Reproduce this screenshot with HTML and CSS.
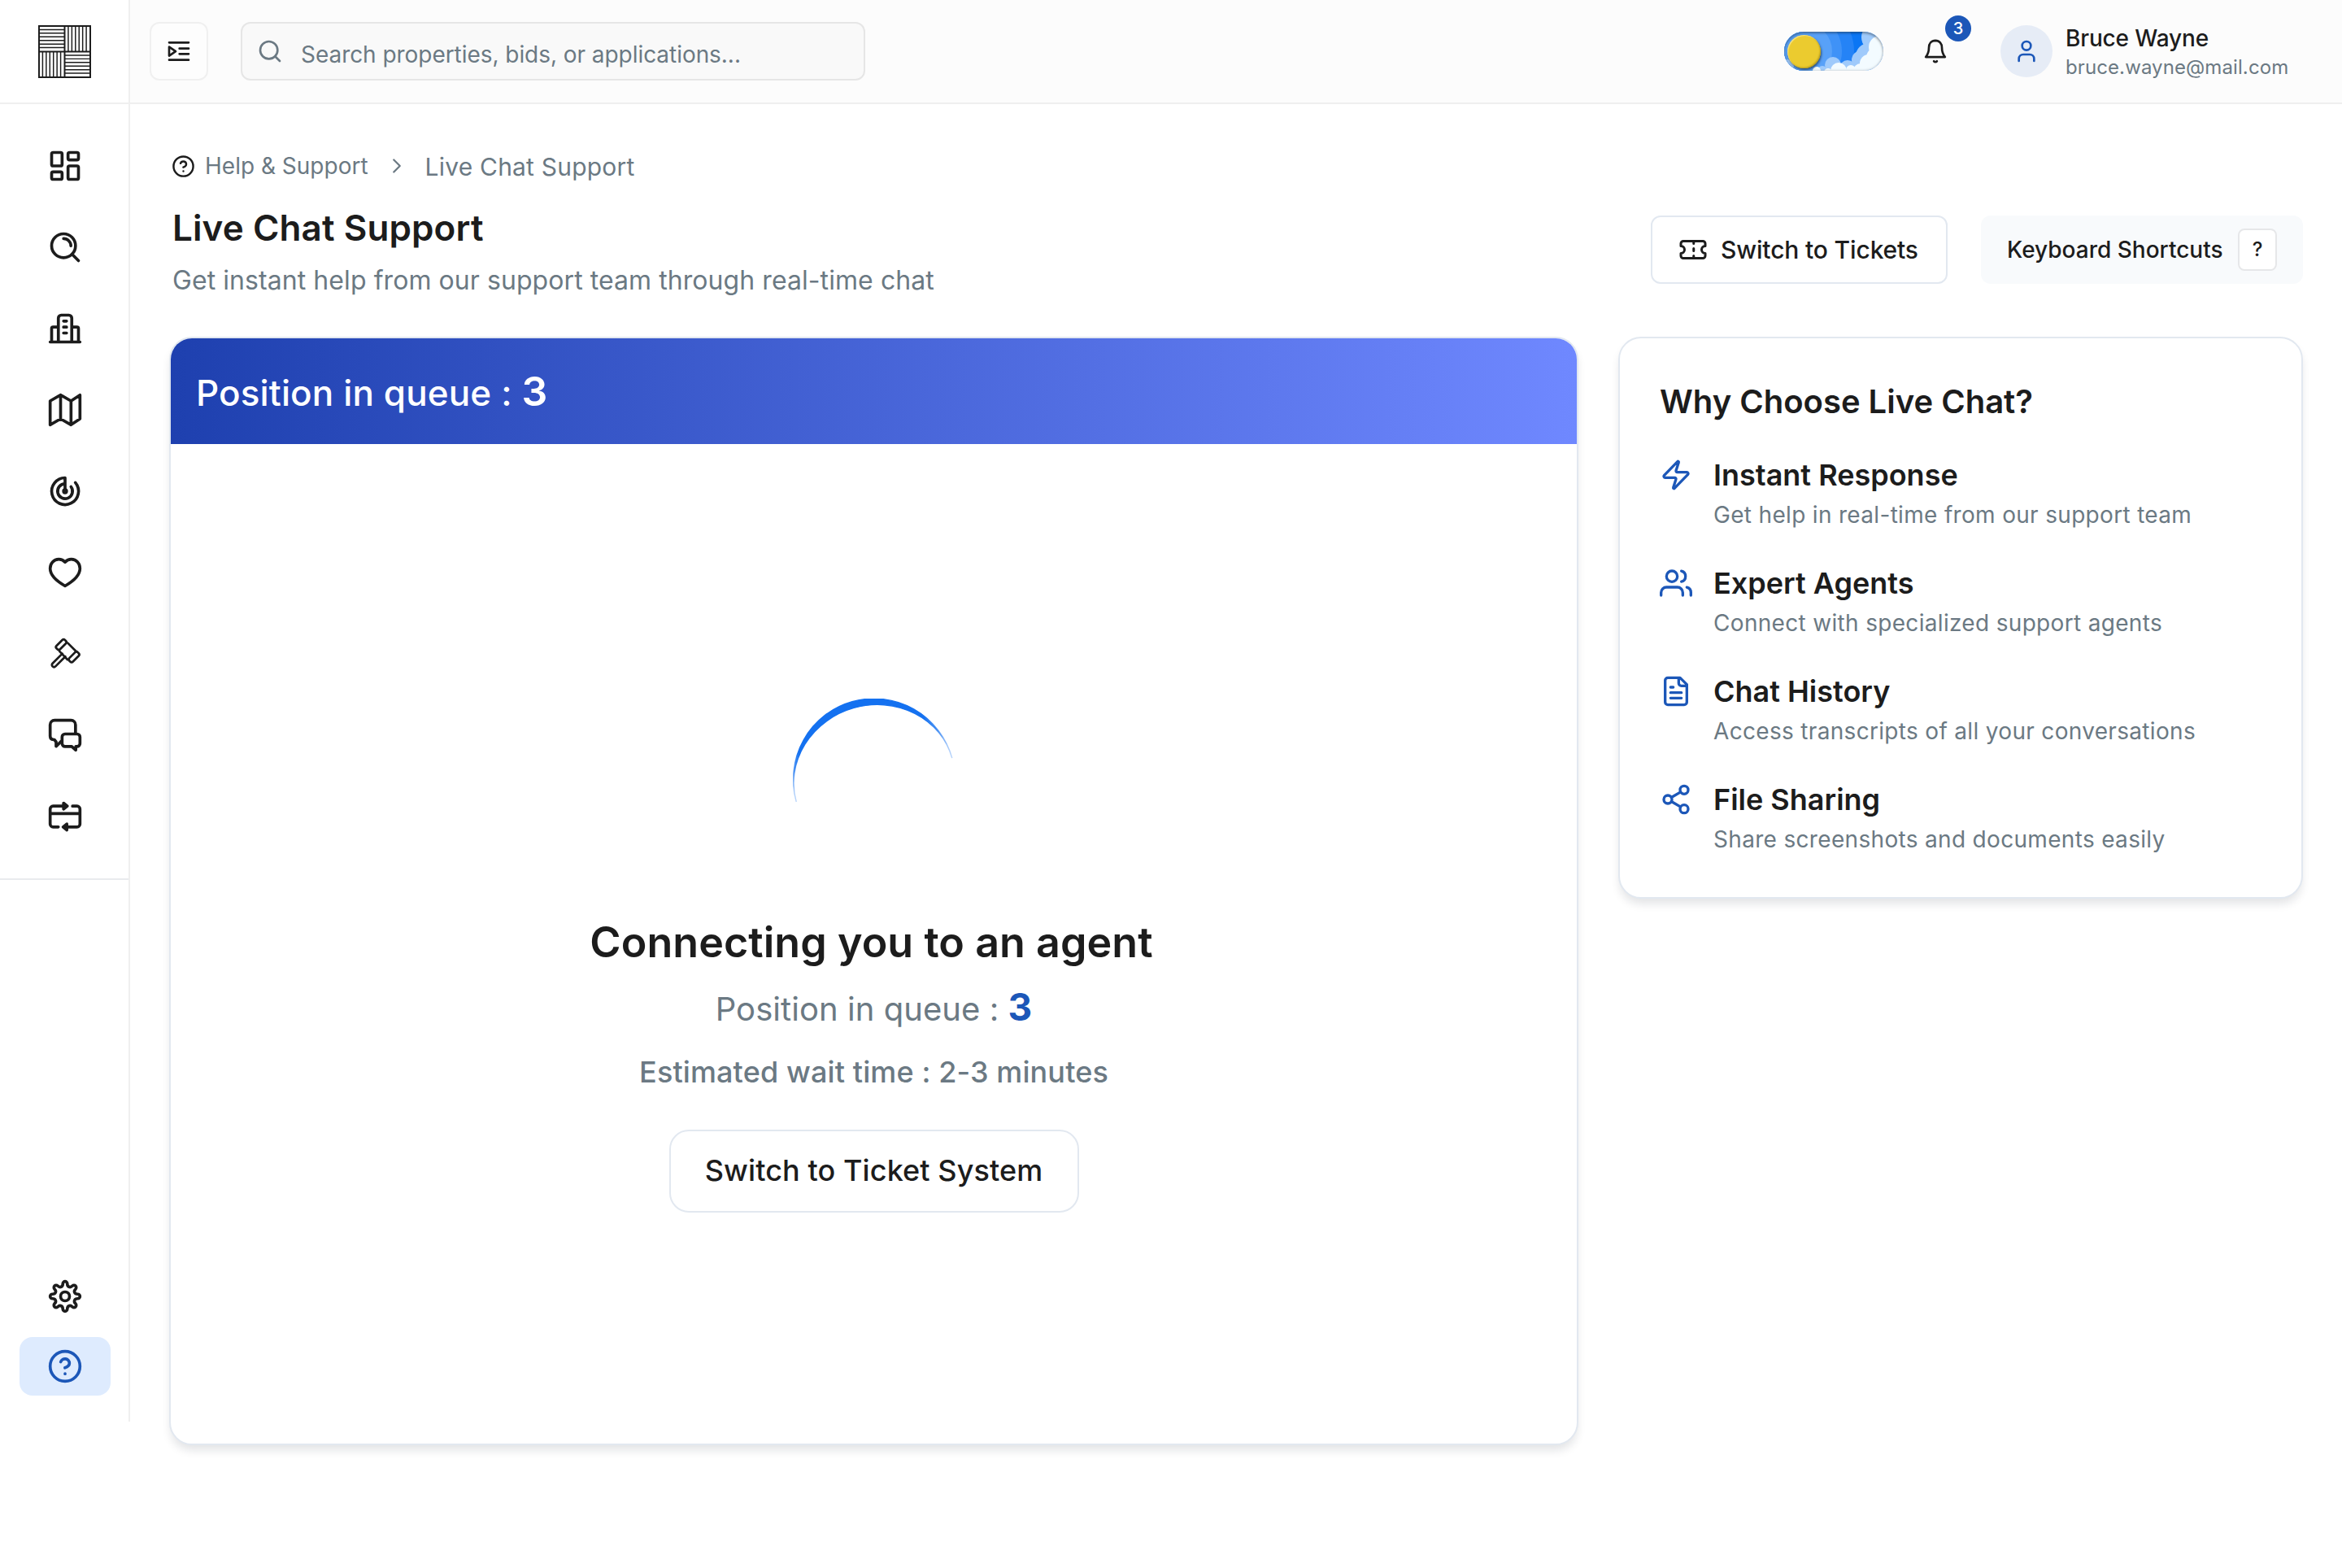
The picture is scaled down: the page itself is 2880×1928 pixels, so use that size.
FILE: index.html
```html
<!DOCTYPE html>
<html lang="en">
  <head>
    <meta charset="UTF-8" />
    <meta name="viewport" content="width=device-width, initial-scale=1.0" />
    <title>Live Chat Support</title>
    <link rel="stylesheet" href="styles.css">
  </head>
  <body>
    <div class="app">
      <aside class="sidebar">
        <a class="logo" href="#">
          <svg width="65" height="65" viewBox="0 0 66 66">
            <path d="M1 1h64v64H1zM33 1v64M1 33h64" stroke-width="2" />
            <path d="M1 5.500h32M1 10h32M1 14.500h32M1 19h32M1 23.500h32M1 28h32M33 37.500h32M33 42h32M33 46.500h32M33 51h32M33 55.500h32M33 60h32M37.500 1v32M42 1v32M46.500 1v32M51 1v32M55.500 1v32M60 1v32M5.500 33v32M10 33v32M14.500 33v32M19 33v32M23.500 33v32M28 33v32" stroke-width="1.500" />
          </svg>
        </a>
        <nav class="nav">
          <a href="#"><svg class="icon" viewBox="0 0 24 24"><rect x="3" y="3" width="7" height="9" rx="1" /><rect x="14" y="3" width="7" height="5" rx="1" /><rect x="14" y="12" width="7" height="9" rx="1" /><rect x="3" y="16" width="7" height="5" rx="1" /></svg></a>
          <a href="#"><svg class="icon" viewBox="0 0 24 24"><circle cx="11" cy="11" r="8" /><path d="m16.800 16.800 4.200 4.200M11 6.200a4.900 4.900 0 0 1 4.900 4.900" /></svg></a>
          <a href="#"><svg class="icon" viewBox="0 0 24 24"><path d="M2 21h20M7.500 21V5a2 2 0 0 1 2-2h5a2 2 0 0 1 2 2v16M3 21v-9a1 1 0 0 1 1-1h3.500M21 21v-9a1 1 0 0 0-1-1h-3.500M11 7h2M11 11h2M11 15h2" /></svg></a>
          <a href="#"><svg class="icon" viewBox="0 0 24 24"><path d="M2 6l7-4 7 4 6-4v16l-6 4-7-4-7 4zM9 2v16M16 6v16" /></svg></a>
          <a href="#"><svg class="icon" viewBox="0 0 24 24"><path d="M12 12V3a9 9 0 1 0 6.900 3.200M12 7a5 5 0 1 0 4 2" /><circle cx="12" cy="12" r="1" /></svg></a>
          <a href="#"><svg class="icon" viewBox="0 0 24 24"><path d="M12 5C10.800 3.700 9.400 3.100 7.800 3.100 4.500 3.100 2 5.800 2 9.300 2 14.500 7.800 18.600 12 21c4.200-2.400 10-6.500 10-11.700 0-3.500-2.500-6.200-5.800-6.200-1.600 0-3 .6-4.200 1.900z" /></svg></a>
          <a href="#"><svg class="icon icon-thin" viewBox="0 0 24 24"><rect x="5.400" y="4.100" width="8" height="3.400" rx="1.300" transform="rotate(-45 9.400 5.800)" /><rect x="14" y="12.400" width="8" height="3.400" rx="1.300" transform="rotate(-45 18 14.100)" /><path d="M13.800 4.700l5.400 5.400M8.300 10.300l5.300 5.500M10.200 11.800l-6.600 6.600a1.400 1.400 0 0 0 2 2l6.600-6.600" /></svg></a>
          <a href="#"><svg class="icon" viewBox="0 0 24 24"><path d="M19 11V5a3 3 0 0 0-3-3H5a3 3 0 0 0-3 3v7.500C2 14 3 15 4.800 15L6 16.500v3L9.500 16" /><path d="M12 11.200h8a2 2 0 0 1 2 2v4.400a2 2 0 0 1-2 2h-.800v2.400l-2.700-2.400H12a2 2 0 0 1-2-2v-4.400a2 2 0 0 1 2-2z" /></svg></a>
          <a href="#"><svg class="icon" viewBox="0 0 24 24"><path d="M7.500 19H4a2 2 0 0 1-2-2V7a2 2 0 0 1 2-2h8M17 5h3a2 2 0 0 1 2 2v10a2 2 0 0 1-2 2h-8M2 10h20" /><path class="solid" d="M11 3l2.500 2L11 7zM13.200 17l-2.500 2 2.500 2z" /></svg></a>
        </nav>
        <div class="nav-bottom">
          <a href="#"><svg class="icon" viewBox="-12 -12 24 24"><path d="M-1.500-8.500A1.500 1.500 0 0 1 1.500-8.500C1.500-6.300 3.390-5.510 4.950-7.070A1.500 1.500 0 0 1 7.070-4.950C5.510-3.390 6.300-1.500 8.500-1.500A1.500 1.500 0 0 1 8.500 1.500C6.300 1.500 5.510 3.390 7.070 4.950A1.500 1.500 0 0 1 4.950 7.070C3.390 5.510 1.500 6.300 1.500 8.500A1.500 1.500 0 0 1-1.500 8.500C-1.500 6.300-3.390 5.510-4.950 7.070A1.500 1.500 0 0 1-7.070 4.950C-5.510 3.390-6.300 1.500-8.500 1.500A1.500 1.500 0 0 1-8.500-1.500C-6.300-1.500-5.510-3.390-7.070-4.950A1.500 1.500 0 0 1-4.950-7.070C-3.390-5.510-1.500-6.300-1.500-8.500z" /><circle r="3" /></svg></a>
          <a class="active" href="#"><svg class="icon" viewBox="0 0 24 24"><circle cx="12" cy="12" r="10" /><path d="M9.090 9a3 3 0 0 1 5.830 1c0 2-3 3-3 3M12 17h.01" /></svg></a>
        </div>
      </aside>

      <div class="main">
        <header class="topbar">
          <button class="menu-btn">
            <svg class="icon" viewBox="0 0 24 24"><path d="M3 4h18M12.500 9.500H21M12.500 14.500H21M3 20h18M3 8v8.200l6-4.100z" /></svg>
          </button>
          <div class="search">
            <svg class="icon" viewBox="0 0 24 24"><circle cx="11" cy="11" r="8" /><path d="m21 21-4.300-4.300" /></svg>
            <span>Search properties, bids, or applications...</span>
          </div>
          <div class="theme-toggle">
            <svg width="122" height="48" viewBox="0 0 122 48">
              <rect width="122" height="48" fill="#0b76f4" />
              <circle cx="24" cy="24" r="62" fill="#2583f6" />
              <circle cx="24" cy="24" r="47" fill="#3f92f7" />
              <circle cx="24" cy="24" r="35" fill="#58a1f8" />
              <g fill="#9fcafb">
                <circle cx="112" cy="7" r="17" /><circle cx="104" cy="30" r="16" /><circle cx="95" cy="35" r="12" /><circle cx="78" cy="45" r="10" /><circle cx="60" cy="41" r="10" /><circle cx="47" cy="48" r="6" /><circle cx="4" cy="42" r="8" />
              </g>
              <g fill="#f3fbff">
                <circle cx="118" cy="19" r="14" /><circle cx="104" cy="39" r="11" /><circle cx="114" cy="32" r="13" /><circle cx="94" cy="48" r="9" /><circle cx="82" cy="47" r="6" /><circle cx="67" cy="48" r="10" /><circle cx="54" cy="50" r="5" /><circle cx="40" cy="48" r="5" />
              </g>
            </svg>
            <span class="knob"></span>
          </div>
          <div class="bell">
            <svg class="icon" viewBox="0 0 24 24"><path d="M12 2.200c-3.800 0-6 2.900-6 6.500 0 4.500-1 6.500-2.900 8.600h17.800C19 15.200 18 13.200 18 8.700c0-3.600-2.200-6.500-6-6.500zM10.600 21.200c.8.900 2 .9 2.800 0" /></svg>
            <span class="badge">3</span>
          </div>
          <div class="user">
            <span class="avatar">
              <svg class="icon" viewBox="0 0 24 24"><path d="M19 21v-2a4 4 0 0 0-4-4H9a4 4 0 0 0-4 4v2" /><circle cx="12" cy="7" r="4" /></svg>
            </span>
            <div>
              <div class="user-name">Bruce Wayne</div>
              <div class="user-mail">bruce.wayne@mail.com</div>
            </div>
          </div>
        </header>

        <main class="content">
          <div class="breadcrumb">
            <svg class="icon crumb-icon" viewBox="0 0 24 24"><circle cx="12" cy="12" r="10" /><path d="M9.090 9a3 3 0 0 1 5.830 1c0 2-3 3-3 3M12 17h.01" /></svg>
            <span>Help &amp; Support</span>
            <svg class="icon crumb-sep" viewBox="0 0 24 24"><path d="m9 18 6-6-6-6" /></svg>
            <span class="crumb-current">Live Chat Support</span>
          </div>

          <div class="page-head">
            <div>
              <h1>Live Chat Support</h1>
              <p class="subtitle">Get instant help from our support team through real-time chat</p>
            </div>
            <div class="actions">
              <button class="btn-tickets">
                <svg class="icon" viewBox="0 0 24 24"><path d="M2 9a3 3 0 0 1 0 6v2a2 2 0 0 0 2 2h16a2 2 0 0 0 2-2v-2a3 3 0 0 1 0-6V7a2 2 0 0 0-2-2H4a2 2 0 0 0-2 2zM12.500 5v2M12.500 11v2M12.500 17v2" /></svg>
                Switch to Tickets
              </button>
              <button class="btn-keys">Keyboard Shortcuts<kbd>?</kbd></button>
            </div>
          </div>

          <div class="panels">
            <section class="card chat">
              <div class="chat-head">Position in queue : <b>3</b></div>
              <div class="chat-body">
                <svg width="200" height="200" viewBox="-100 -100 200 200">
                  <defs>
                    <linearGradient id="fade" x1="0" x2="1">
                      <stop offset="0" stop-color="#1471f0" stop-opacity="0.3" />
                      <stop offset="0.1" stop-color="#1471f0" />
                      <stop offset="0.9" stop-color="#1471f0" />
                      <stop offset="1" stop-color="#1471f0" stop-opacity="0.3" />
                    </linearGradient>
                  </defs>
                  <path fill="url(#fade)" stroke="url(#fade)" stroke-width="1.4" transform="rotate(-15.700)" d="M-99.500 0A99.500 100 0 0 1 99.500 0A99.500 92 0 0 0-99.500 0z" />
                </svg>
                <h2>Connecting you to an agent</h2>
                <p class="queue">Position in queue : <b>3</b></p>
                <p class="wait">Estimated wait time : 2-3 minutes</p>
                <button class="btn-system">Switch to Ticket System</button>
              </div>
            </section>

            <section class="card why">
              <h3>Why Choose Live Chat?</h3>
              <ul>
                <li>
                  <svg class="icon" viewBox="0 0 24 24"><path d="M4 14a1 1 0 0 1-.780-1.630l9.900-10.200a.5.5 0 0 1 .860.460l-1.920 6.020A1 1 0 0 0 13 10h7a1 1 0 0 1 .780 1.630l-9.900 10.200a.5.5 0 0 1-.860-.460l1.920-6.020A1 1 0 0 0 11 14z" /></svg>
                  <div><h4>Instant Response</h4><p>Get help in real-time from our support team</p></div>
                </li>
                <li>
                  <svg class="icon" viewBox="0 0 24 24"><path d="M17 21v-2a4 4 0 0 0-4-4H5a4 4 0 0 0-4 4v2M23 21v-2a4 4 0 0 0-3-3.870M16 3.130a4 4 0 0 1 0 7.750" /><circle cx="9" cy="7" r="4" /></svg>
                  <div><h4>Expert Agents</h4><p>Connect with specialized support agents</p></div>
                </li>
                <li>
                  <svg class="icon" viewBox="0 0 24 24"><path d="M15 2H6a2 2 0 0 0-2 2v16a2 2 0 0 0 2 2h12a2 2 0 0 0 2-2V7zM14 2v4a2 2 0 0 0 2 2h4M10 9H8M16 13H8M16 17H8" /></svg>
                  <div><h4>Chat History</h4><p>Access transcripts of all your conversations</p></div>
                </li>
                <li>
                  <svg class="icon" viewBox="0 0 24 24"><circle cx="18" cy="5" r="3" /><circle cx="6" cy="12" r="3" /><circle cx="18" cy="19" r="3" /><path d="m8.590 13.510 6.830 3.980M15.410 6.510l-6.820 3.980" /></svg>
                  <div><h4>File Sharing</h4><p>Share screenshots and documents easily</p></div>
                </li>
              </ul>
            </section>
          </div>
        </main>
      </div>
    </div>
  </body>
</html>
```
FILE: styles.css
```css
* {
  box-sizing: border-box;
}
body {
  margin: 0;
  background: #fff;
  color: #1c1c1c;
  font-family: Inter, sans-serif;
}
h1, h2, h3, h4, p, ul {
  margin: 0;
  padding: 0;
  font-weight: 400;
}
a {
  color: inherit;
}
button {
  font-family: inherit;
  color: inherit;
  padding: 0;
  border: none;
}
.icon {
  display: block;
  width: 44px;
  height: 44px;
  flex: none;
  fill: none;
  stroke: currentColor;
  stroke-width: 2;
  stroke-linecap: round;
  stroke-linejoin: round;
}
.icon-thin {
  stroke-width: 1.5;
}
.solid {
  fill: currentColor;
}
.app {
  display: flex;
  align-items: flex-start;
  min-height: 100vh;
}

/* sidebar */
.sidebar {
  display: flex;
  flex-direction: column;
  width: 160px;
  height: 1748px;
  border-right: 2px solid #efefef;
}
.logo {
  display: flex;
  justify-content: center;
  align-items: center;
  height: 128px;
  padding-left: 1px;
  border-bottom: 2px solid #efefef;
}
.logo svg {
  fill: none;
  stroke: #1c1c1c;
}
.nav {
  display: flex;
  flex-direction: column;
  align-items: center;
  gap: 56px;
  padding: 54px 0 54px 2px;
  border-bottom: 2px solid #e9ebee;
}
.nav-bottom {
  display: flex;
  flex-direction: column;
  align-items: center;
  gap: 28px;
  margin-top: auto;
  padding: 0 0 32px 2px;
}
.active {
  display: flex;
  justify-content: center;
  align-items: center;
  width: 112px;
  height: 72px;
  border-radius: 16px;
  background: #deebfe;
  color: #1c57b8;
}

/* top bar */
.main {
  flex: 1;
}
.topbar {
  display: flex;
  align-items: center;
  height: 128px;
  padding: 0 48px 0 24px;
  background: #fcfcfc;
  border-bottom: 2px solid #efefef;
}
.topbar .icon {
  width: 32px;
  height: 32px;
}
.menu-btn {
  display: flex;
  justify-content: center;
  align-items: center;
  width: 72px;
  height: 72px;
  border: 2px solid #f0f0f0;
  border-radius: 12px;
  background: #fdfdfd;
}
.search {
  display: flex;
  align-items: center;
  gap: 22px;
  width: 768px;
  height: 72px;
  margin: 0 auto 0 40px;
  padding-left: 18px;
  border: 2px solid #e6e6e6;
  border-radius: 12px;
  background: #f9f9f9;
  color: #6b7983;
  font-size: 28px;
  letter-spacing: -0.05px;
}
.search span {
  padding-top: 7px;
}
.theme-toggle {
  position: relative;
  width: 122px;
  height: 48px;
  margin-right: 48px;
  border-radius: 24px;
  overflow: hidden;
}
.theme-toggle svg {
  display: block;
}
.theme-toggle::after {
  content: "";
  position: absolute;
  inset: 0;
  border-radius: 24px;
  box-shadow: inset 0 2px 3px rgba(0, 0, 0, 0.3), inset 0 0 3px rgba(120, 130, 140, 0.5);
}
.knob {
  position: absolute;
  left: 4px;
  top: 4px;
  width: 41px;
  height: 41px;
  border-radius: 50%;
  background: #ebcb2f;
  box-shadow: 1px 2px 3px rgba(0, 0, 0, 0.5), inset 1px 1px 1px #f7e48a, inset -1px -1px 2px #b59a1c;
}
.bell {
  position: relative;
  margin-right: 64px;
}
.badge {
  position: absolute;
  left: 28px;
  top: -28px;
  width: 32px;
  height: 32px;
  border-radius: 50%;
  background: #1c57b8;
  color: #fff;
  font-size: 20px;
  font-weight: 500;
  line-height: 32px;
  text-align: center;
}
.user {
  display: flex;
  align-items: center;
  gap: 16px;
  width: 372px;
}
.avatar {
  display: flex;
  justify-content: center;
  align-items: center;
  width: 64px;
  height: 64px;
  border-radius: 50%;
  background: #e6ecf6;
  color: #1c57b8;
}
.user-name {
  padding-top: 2px;
  font-size: 28px;
  font-weight: 500;
  line-height: 36px;
  letter-spacing: -0.15px;
}
.user-mail {
  margin-top: 2px;
  color: #6b7983;
  font-size: 24px;
  line-height: 32px;
  letter-spacing: 0.1px;
}

/* content */
.content {
  padding: 52px 48px 0;
}
.breadcrumb {
  display: flex;
  align-items: center;
  height: 48px;
  padding-left: 3px;
  color: #6b7983;
  font-size: 28px;
}
.crumb-icon {
  width: 29px;
  height: 29px;
  margin-right: 12px;
  color: #1c1c1c;
}
.crumb-sep {
  width: 30px;
  height: 30px;
  margin: 0 20px;
  stroke-width: 1.8;
}
.crumb-current {
  padding-top: 2px;
  font-size: 30px;
  letter-spacing: 0.2px;
}
.page-head {
  display: flex;
  justify-content: space-between;
  margin-top: 20px;
  padding-left: 4px;
}
h1 {
  font-size: 44px;
  font-weight: 600;
  line-height: 64px;
  letter-spacing: 0.1px;
}
.subtitle {
  margin-top: 9px;
  color: #6b7983;
  font-size: 32px;
  line-height: 48px;
  letter-spacing: 0.07px;
}
.actions {
  display: flex;
  gap: 41px;
  margin-top: 17px;
}
.btn-tickets,
.btn-keys {
  display: flex;
  align-items: center;
  height: 84px;
  border-radius: 12px;
  font-size: 28px;
  font-weight: 500;
}
.btn-tickets {
  gap: 16px;
  width: 365px;
  padding-left: 32px;
  border: 2px solid #e2e8f0;
  background: #fff;
  font-size: 30px;
  letter-spacing: -0.15px;
}
.btn-tickets .icon {
  width: 36px;
  height: 36px;
}
.btn-keys {
  justify-content: space-between;
  width: 396px;
  padding: 0 32px;
  background: #f8fafc;
}
kbd {
  width: 48px;
  height: 52px;
  border: 2px solid #e6e7e9;
  border-radius: 8px;
  background: #fff;
  font-family: inherit;
  font-size: 24px;
  line-height: 48px;
  text-align: center;
}
.panels {
  display: grid;
  grid-template-columns: 1733px 842px;
  justify-content: space-between;
  align-items: start;
  margin-top: 45px;
  padding-bottom: 100px;
}
.card {
  border: 2px solid #e2e8f0;
  border-radius: 28px;
  background: #fff;
  box-shadow: 0 8px 12px -2px rgba(15, 23, 42, 0.12);
}
.chat {
  height: 1363px;
  overflow: hidden;
}
.chat-head {
  height: 130px;
  padding: 35px 31px 0;
  background: linear-gradient(to right, #1e40af, #6f88ff);
  color: #fff;
  font-size: 44px;
  font-weight: 500;
  line-height: 60px;
  letter-spacing: 0.12px;
}
.chat-head b {
  font-size: 50px;
  font-weight: 600;
}
.chat-body {
  display: flex;
  flex-direction: column;
  align-items: center;
  padding: 313px 0 0;
}
h2 {
  margin: 68px 6px 0 0;
  font-size: 52px;
  font-weight: 600;
  line-height: 64px;
  letter-spacing: 0.05px;
}
.queue {
  margin-top: 19px;
  color: #6b7983;
  font-size: 40px;
  line-height: 56px;
  letter-spacing: 0.05px;
}
.queue b {
  color: #1c57b8;
  font-size: 46px;
  font-weight: 700;
}
.wait {
  margin-top: 25px;
  color: #6b7983;
  font-size: 36px;
  font-weight: 500;
  line-height: 48px;
  letter-spacing: 0.12px;
}
.btn-system {
  width: 504px;
  height: 102px;
  margin-top: 47px;
  padding-bottom: 2px;
  border: 2px solid #e2e8f0;
  border-radius: 24px;
  background: #fff;
  font-size: 36px;
  font-weight: 500;
  letter-spacing: 0.1px;
}
.why {
  padding: 50px 48px 51px 49px;
}
h3 {
  font-size: 40px;
  font-weight: 600;
  line-height: 56px;
}
ul {
  display: flex;
  flex-direction: column;
  gap: 40px;
  margin-top: 38px;
  list-style: none;
}
li {
  display: flex;
  gap: 26px;
  height: 93px;
}
li .icon {
  width: 40px;
  height: 40px;
  margin-top: 4px;
  color: #1c57b8;
}
h4 {
  font-size: 36px;
  font-weight: 600;
  line-height: 48px;
}
li p {
  margin-top: 5px;
  color: #6b7983;
  font-size: 28px;
  line-height: 40px;
  letter-spacing: 0.32px;
}
```
